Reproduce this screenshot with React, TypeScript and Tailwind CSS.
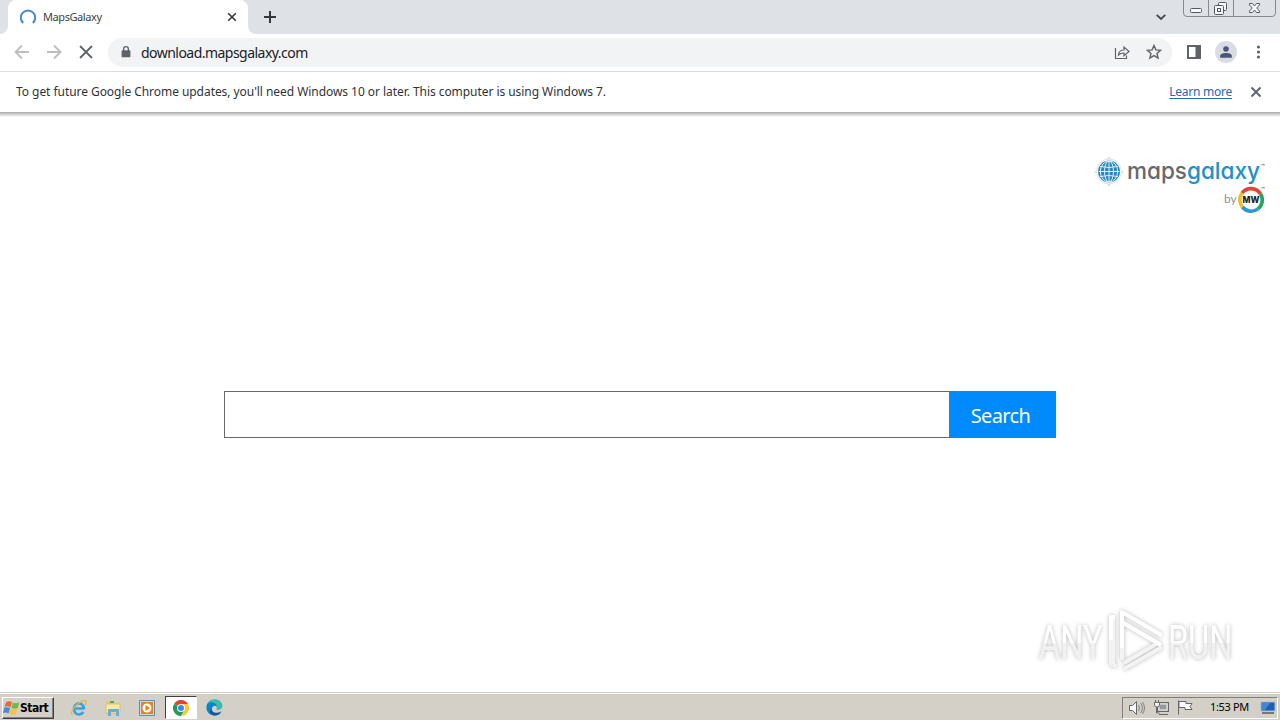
import type { ReactNode } from "react";

function Icon({ size = 16, className = "", children }: { size?: number; className?: string; children: ReactNode }) {
  return (
    <svg width={size} height={size} viewBox="0 0 16 16" fill="none" stroke="currentColor" className={`shrink-0 ${className}`}>
      {children}
    </svg>
  );
}

function TabStrip() {
  return (
    <div className="flex h-[34px] bg-[#dee1e6] text-[#3c4043]">
      <div className="relative ml-2 flex h-full w-[240px] items-center rounded-t-lg bg-white pl-3 pr-2">
        <svg width="8" height="8" className="absolute -left-2 bottom-0"><path d="M8 0V8H0A8 8 0 0 0 8 0Z" fill="#fff" /></svg>
        <svg width="8" height="8" className="absolute -right-2 bottom-0"><path d="M0 0V8H8A8 8 0 0 1 0 0Z" fill="#fff" /></svg>
        <Icon className="text-[#4a86d8]">
          <path d="M3.2 14A7.2 7.2 0 1 1 12.8 14" strokeWidth="2" />
        </Icon>
        <span className="ml-[7px] text-[11px] tracking-[-0.42px]">MapsGalaxy</span>
        <Icon className="ml-auto text-[#35373a]">
          <path d="M4.2 4.2l7.6 7.6M11.8 4.2l-7.6 7.6" strokeWidth="1.6" />
        </Icon>
      </div>
      <Icon className="ml-[14px] mt-[9px] text-[#35373a]">
        <path d="M8 2v12M2 8h12" strokeWidth="2" />
      </Icon>
      <Icon className="ml-auto mt-[9px] text-[#45484d]">
        <path d="M3.7 5.8L8 10l4.3-4.2" strokeWidth="1.8" />
      </Icon>
      <WindowButtons />
    </div>
  );
}

function WindowButtons() {
  return (
    <svg width="94" height="18" viewBox="0 0 94 18" fill="none" className="ml-[14px] mr-[3px] shrink-0">
      <path d="M.5 0v13q0 3.500 3.500 3.500h85q3.500 0 3.500-3.500V0M25.500 0v16M50.500 0v16" stroke="#858990" />
      <g stroke="#575b61">
        <rect x="7.500" y="8.500" width="11" height="4" rx="1" fill="#f7f8f9" />
        <rect x="35.500" y="2.500" width="8" height="8" rx="1" fill="#f7f8f9" />
        <rect x="31.500" y="5.500" width="9" height="9" rx="1" fill="#f7f8f9" />
        <rect x="34.500" y="8.500" width="3" height="3" />
        <path d="M66.500 3.500h3l2 2.500 2-2.500h3v1.500L73.700 8l2.800 3v1.500h-3l-2-2.500-2 2.500h-3V11l2.800-3-2.800-3z" fill="#f7f8f9" />
      </g>
    </svg>
  );
}

function Toolbar() {
  return (
    <div className="flex h-[38px] items-center border-b border-[#d9dbdd] bg-white pb-px pl-[14px] pr-[14px] text-[#5f6368]">
      <Icon className="text-[#bbbdc0]">
        <path d="M15 8H2M8 1.500L1.500 8 8 14.500" strokeWidth="1.800" />
      </Icon>
      <Icon className="ml-4 text-[#bbbdc0]">
        <path d="M1 8h13M8 1.500L14.500 8 8 14.500" strokeWidth="1.800" />
      </Icon>
      <Icon className="ml-4">
        <path d="M2 2l12 12M14 2L2 14" strokeWidth="1.800" />
      </Icon>
      <div className="ml-[14px] flex h-[29px] w-[1064px] items-center rounded-full bg-[#f1f3f4] pl-[11px] pr-[10px]">
        <Icon size={14}>
          <rect x="3" y="6" width="10" height="8" rx="1" fill="currentColor" stroke="none" />
          <path d="M5.300 7V4.500a2.700 2.700 0 0 1 5.400 0V7" strokeWidth="1.500" />
        </Icon>
        <span className="ml-2 pt-px text-[14px] tracking-[-0.53px] text-[#202124]">download.mapsgalaxy.com</span>
        <Icon className="ml-auto">
          <path d="M1.500 4v10.500h11v-3M4.500 11c.3-3.500 2.500-5 5.500-5V3l5 4.500-5 4.300V9C7.500 9 6 9.500 4.500 11z" strokeWidth="1.200" />
        </Icon>
        <Icon className="ml-4">
          <path d="M8 1.500l1.900 4.400 4.700.4-3.600 3.100 1.100 4.700L8 11.600l-4.100 2.500L5 9.400 1.400 6.300l4.700-.4z" strokeWidth="1.400" />
        </Icon>
      </div>
      <Icon className="ml-[14px]">
        <rect x="2" y="2" width="12" height="12" strokeWidth="2" />
        <path d="M9.500 2H14v12H9.500z" fill="currentColor" stroke="none" />
      </Icon>
      <div className="ml-[13px] flex size-[22px] items-center justify-center rounded-full bg-[#d9dde3] text-[#4b5777]">
        <Icon size={14}>
          <circle cx="8" cy="4.500" r="3.200" fill="currentColor" stroke="none" />
          <path d="M1.300 14.500v-2C1.300 9.800 5 9 8 9s6.700.8 6.700 3.500v2z" fill="currentColor" stroke="none" />
        </Icon>
      </div>
      <Icon className="ml-[13px]">
        <g fill="currentColor" stroke="none">
          <circle cx="8.500" cy="3" r="1.600" /><circle cx="8.500" cy="8" r="1.600" /><circle cx="8.500" cy="13" r="1.600" />
        </g>
      </Icon>
    </div>
  );
}

function InfoBar() {
  return (
    <div className="flex h-10 items-center bg-white pl-4 pr-4 text-[12px] text-[#303336]">
      <span className="tracking-[-0.053px]">
        To get future Google Chrome updates, you'll need Windows 10 or later. This computer is using Windows 7.
      </span>
      <a className="ml-auto tracking-[-0.25px] text-[#2865bd] underline underline-offset-2">Learn more</a>
      <Icon className="ml-4 text-[#5f6368]">
        <path d="M3.500 3.500l9 9M12.500 3.500l-9 9" strokeWidth="1.900" />
      </Icon>
    </div>
  );
}

function BrandLogo() {
  return (
    <svg width="180" height="64" viewBox="1092 154 180 64" className="ml-auto mr-2">
      <path d="M1109 156l2 4h-4zM1109 187l2-4h-4zM1094 172l4-2v4zM1124 172l-4-2v4z" fill="#d2dade" />
      <circle cx="1109" cy="171.500" r="12.500" fill="#fff" stroke="#d2dade" strokeWidth=".8" />
      <circle cx="1109" cy="171.500" r="11" fill="#2d86bb" />
      <g fill="none" stroke="#e0f1fb" strokeWidth="1">
        <ellipse cx="1109" cy="171.500" rx="4.500" ry="10.500" />
        <ellipse cx="1109" cy="171.500" rx="8.700" ry="10.500" />
        <path d="M1109 161v21M1098.500 171.500h21M1100 166.500q9 2 18 0M1100 176.500q9-2 18 0" />
      </g>
      <text x="1127" y="178.500" fontFamily="Inter, sans-serif" fontSize="23.500" fontWeight="500" textLength="133" lengthAdjust="spacingAndGlyphs" className="[font-feature-settings:'cv11']">
        <tspan fill="#66696c">maps</tspan>
        <tspan fill="#258fc8">galaxy</tspan>
      </text>
      <g fontFamily="Inter, sans-serif" fontSize="6" fontWeight="600" fill="#55585b">
        <text x="1261" y="169">™</text>
        <text x="1261" y="192">™</text>
      </g>
      <text x="1224" y="203" fontFamily="Lato, sans-serif" fontSize="12" fill="#929496">by</text>
      <g fill="none" strokeWidth="3.600">
        <path d="M1242 193a11.300 11.300 0 0 1 18.600 1" stroke="#e04438" />
        <path d="M1260.600 194a11.300 11.300 0 0 1-2.600 14.800" stroke="#27a55b" />
        <path d="M1258 208.800a11.300 11.300 0 0 1-15.700-1.800" stroke="#2b99d5" />
        <path d="M1242.300 207a11.300 11.300 0 0 1-.3-14" stroke="#f4bd27" />
      </g>
      <text x="1242.500" y="203" fontFamily="Inter, sans-serif" fontSize="9" fontWeight="800" textLength="17" lengthAdjust="spacingAndGlyphs" fill="#222">MW</text>
    </svg>
  );
}

function Watermark() {
  return (
    <svg width="210" height="70" viewBox="1030 605 210 70" className="absolute bottom-[17px] right-10 drop-shadow-[0_0_2px_rgba(0,0,0,0.28)]">
      <defs>
        <linearGradient id="shade" x1="0" y1="0" x2="0" y2="1">
          <stop offset="0.5" stopColor="#fff" />
          <stop offset="0.51" stopColor="#f1f1f1" />
        </linearGradient>
      </defs>
      <g fontFamily="Roboto, sans-serif" fontSize="48" fontWeight="400" fill="url(#shade)">
        <text transform="translate(1039 659) scale(.68 1)">ANY</text>
        <text transform="translate(1168 659) scale(.68 1)">RUN</text>
      </g>
      <g fill="none" strokeWidth="4" strokeLinejoin="round">
        <path d="M1113 663V618M1122 660V622l36 21-34 20M1124 669l38-22" stroke="#f3f3f3" />
        <path d="M1111 640V617h4M1122 648V612l40 23.500M1123 623l38 22" stroke="#fff" />
        <path d="M1111 640v24l6 2" stroke="#f3f3f3" />
      </g>
    </svg>
  );
}

function Page() {
  return (
    <main className="relative flex h-[580px] flex-col bg-white pt-[42px]">
      <div className="absolute inset-x-0 top-0 h-[5px] bg-linear-to-b from-[#aaaaaa] to-white" />
      <BrandLogo />
      <div className="mx-auto mt-[173px] flex h-[47px] w-[832px]">
        <input className="min-w-0 flex-1 border border-r-0 border-[#686868] bg-white outline-none" />
        <button className="w-[107px] bg-[#008afc] pr-1 pt-[2px] text-[20px] tracking-[-0.6px] text-white">Search</button>
      </div>
      <Watermark />
    </main>
  );
}

function Explorer() {
  return (
    <svg width="18" height="18" viewBox="0 0 18 18" fill="none">
      <path d="M14.500 9.500H5M14 10a5 5.500 0 1 0-.8 3" stroke="#3ca2df" strokeWidth="2.700" />
      <path d="M3 15C-1 17 3 8 9 4s9-3 6 2" stroke="#e6b83c" strokeWidth="1.300" />
    </svg>
  );
}

function FolderIcon() {
  return (
    <svg width="18" height="18" viewBox="0 0 18 18">
      <path d="M2 2h5l1 2h7v11H2z" fill="#e8cb73" />
      <path d="M2 5h14v9H2z" fill="#f7e8a5" stroke="#d1b25a" strokeWidth=".6" />
      <path d="M4 10h11v7h-3v-4H7v4H4z" fill="#6baed3" />
      <path d="M6 3h4" stroke="#57a85f" strokeWidth="2" />
    </svg>
  );
}

function MediaIcon() {
  return (
    <svg width="18" height="18" viewBox="0 0 18 18">
      <rect x="1.500" y="1.500" width="15" height="15" fill="#c3dbed" stroke="#5b93bd" />
      <path d="M3 3h12v12H3z" fill="#eb8316" />
      <circle cx="9" cy="9" r="4.500" fill="#fff" />
      <path d="M7.500 6v6l4.500-3z" fill="#eb7d10" />
    </svg>
  );
}

function ChromeIcon() {
  return (
    <svg width="16" height="16" viewBox="0 0 16 16">
      <path d="M8 8L1.070 4A8 8 0 0 1 14.930 4z" fill="#df4536" />
      <path d="M1.070 4A8 8 0 0 0 8 16l3.500-6L8 8z" fill="#239b56" />
      <path d="M14.930 4A8 8 0 0 1 8 16l3.500-6L8 4z" fill="#f9c833" />
      <circle cx="8" cy="8" r="4" fill="#fff" />
      <circle cx="8" cy="8" r="3" fill="#4285e8" />
    </svg>
  );
}

function EdgeIcon() {
  return (
    <svg width="17" height="17" viewBox="0 0 16 16">
      <path d="M.5 7C1-2 15-2 15.500 6.500c.1 2.500-2 4-4.500 3.800-1.500-.2-1-1-.8-1.800C10.500 5 3 3 .5 7z" fill="#38bda8" />
      <path d="M.5 7C1 1.500 10 2 10.200 7.500 8 4.500 4.500 8 5.500 11c1 3.500 5 4 8.500 2C9 18-.5 15 .5 7z" fill="#0b83cc" />
      <path d="M5.500 9c-.5 3.500 3.500 5.500 9 2.500-1 3-4.500 4.500-7 4C3.500 15 2.500 11 5.500 9z" fill="#1455a4" />
    </svg>
  );
}

function StartFlag() {
  return (
    <svg width="18" height="18" viewBox="0 0 17 16" className="shrink-0">
      <path d="M3 2.500C5 1 7 1.500 8.500 2.500L7 7.500C5.500 6.500 3.500 6 1.500 7z" fill="#e86936" />
      <path d="M9.200 2.800c2 1 4 1 6.300-.3L14 8c-2 1-4 .8-6-.2z" fill="#73b84c" />
      <path d="M1.200 7.800c2-1 4-.5 5.500.5l-1.500 5c-1.500-1.200-3.500-1.300-5.200-.5z" fill="#448dd0" />
      <path d="M7.500 8.600c2 1.200 4 1 6.300 0l-1.500 5c-2 1.200-4.500 1-6.300-.1z" fill="#f5c43e" />
    </svg>
  );
}

function TrayIcons() {
  return (
    <svg width="68" height="18" viewBox="0 0 68 18" fill="none" stroke="#666" className="shrink-0">
      <path d="M1.500 6.500h3l4-4v13l-4-4h-3z" fill="#f8f8f8" />
      <path d="M10.500 6q2 3 0 6M12.500 4q4 5 0 10M14.500 3q4 6 0 12" stroke="#777" strokeWidth=".9" />
      <rect x="29.500" y="3.500" width="11" height="9" fill="#bbb" />
      <path d="M31 5h8v6h-8z" fill="#989898" stroke="#eee" />
      <path d="M31 15.500h9M28.500 8v6h3M27.500 1v3M30.500 1v3" />
      <path d="M26.500 3.500h5V6q0 2-2.500 2t-2.500-2z" fill="#f8f8f8" />
      <path d="M50.500 1.500v14M51 2.500h7v2h6l-2 3 2 3h-7v-2h-6z" fill="#fafafa" />
    </svg>
  );
}

function Taskbar() {
  return (
    <footer className="flex h-7 items-center border-t border-[#d4d0c8] bg-[#d4d0c8] pl-[2px] shadow-[inset_0_1px_#fff]">
      <button className="mt-[2px] flex h-[22px] w-[52px] items-center border border-b-[#404040] border-l-white border-r-[#404040] border-t-white font-['DejaVu_Sans_Condensed','DejaVu_Sans',sans-serif] text-[12px] font-bold text-black shadow-[inset_-1px_-1px_#808080] [font-stretch:condensed]">
        <StartFlag />
        <span className="-ml-[1px] tracking-[-0.5px]">Start</span>
      </button>
      <div className="ml-4 mt-[2px] flex items-center gap-4">
        <Explorer />
        <FolderIcon />
        <MediaIcon />
      </div>
      <div className="ml-[9px] mt-[2px] flex h-[23px] w-8 items-center justify-center border border-b-white border-l-[#404040] border-r-white border-t-[#404040] bg-white">
        <ChromeIcon />
      </div>
      <div className="ml-[9px] mt-[2px]"><EdgeIcon /></div>
      <div className="ml-auto mr-[2px] mt-[2px] flex h-[22px] w-[156px] items-center border border-b-white border-l-[#808080] border-r-white border-t-[#808080] pl-[5px]">
        <TrayIcons />
        <span className="ml-[14px] whitespace-nowrap text-[11px] tracking-[-0.35px] text-black">1:53 PM</span>
        <svg width="16" height="16" viewBox="0 0 16 16" className="ml-auto mr-px shrink-0">
          <path d="M1 2h14v9H1z" fill="#1c5eb4" stroke="#a2bfdd" />
          <path d="M2 3h8L5 10H2z" fill="#4287d0" />
          <path d="M2 13h12" stroke="#777" strokeWidth="2" />
        </svg>
      </div>
    </footer>
  );
}

export default function App() {
  return (
    <div className="h-[720px] w-[1280px] overflow-hidden bg-white font-['Noto_Sans',sans-serif]">
      <TabStrip />
      <Toolbar />
      <InfoBar />
      <Page />
      <Taskbar />
    </div>
  );
}
